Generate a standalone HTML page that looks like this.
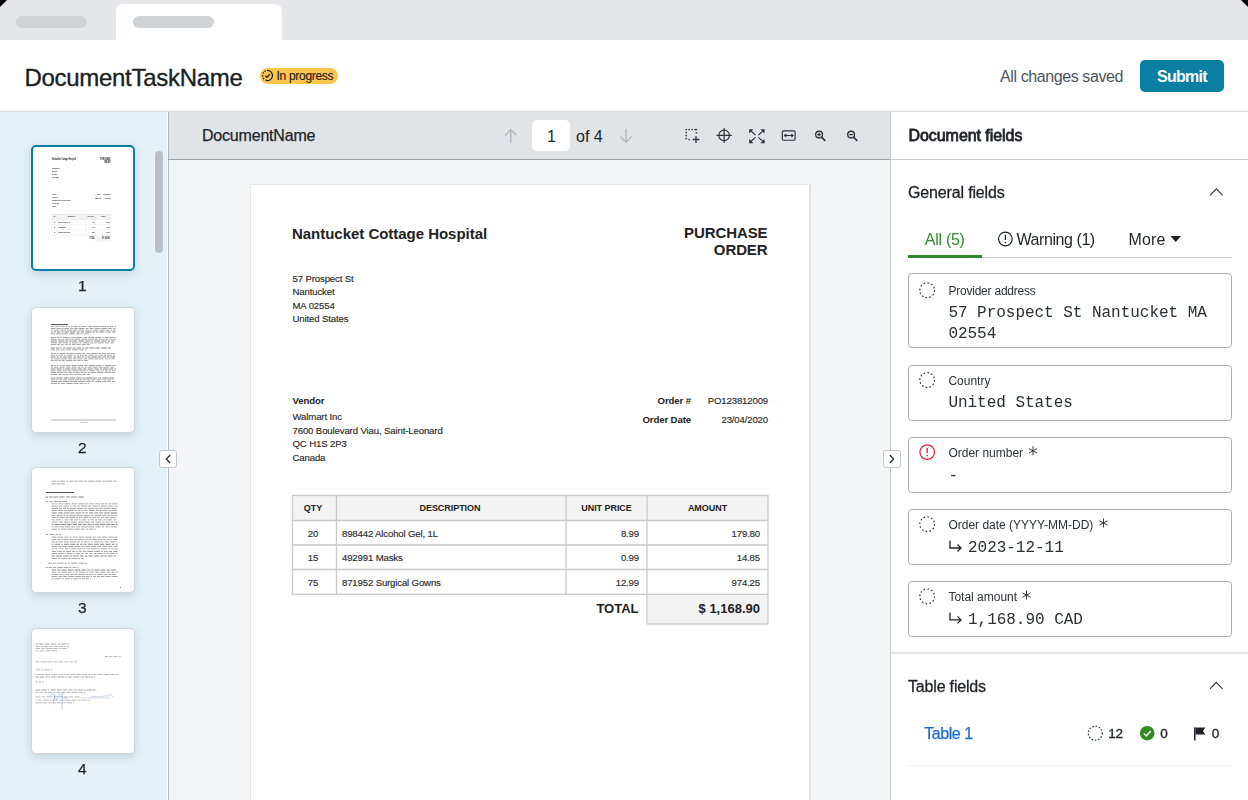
<!DOCTYPE html><html><head><meta charset="utf-8"><style>
html,body{margin:0;padding:0;}
body{width:1248px;height:800px;overflow:hidden;position:relative;background:#fff;font-family:'Liberation Sans',sans-serif;}
.t{position:absolute;line-height:1;white-space:nowrap;}
.r{position:absolute;box-sizing:border-box;}
svg{position:absolute;overflow:visible;}
</style></head><body>

<div class="r" style="left:0px;top:0px;width:1248px;height:40px;background:#e4e6e9"></div>
<div class="r" style="left:116px;top:4px;width:166px;height:36px;background:#fff;border-radius:7px 7px 0 0"></div>
<div class="r" style="left:16px;top:16px;width:71px;height:12px;background:#cfd3d6;border-radius:6px"></div>
<div class="r" style="left:133px;top:16px;width:81px;height:12px;background:#cfd3d6;border-radius:6px"></div>
<svg style="left:0;top:0" width="1248" height="10"><polygon points="0,0 7,0 0,7" fill="#000"/><polygon points="1248,0 1241,0 1248,7" fill="#000"/></svg>
<div class="r" style="left:0px;top:111px;width:1248px;height:1px;background:#d5d9dc"></div>
<div class="t" style="left:24.5px;top:65.60px;font-size:24px;color:#1b1f23;font-weight:normal;letter-spacing:-0.3px;font-family:'Liberation Sans', sans-serif;-webkit-text-stroke:0.35px #1b1f23">DocumentTaskName</div>
<div class="r" style="left:260px;top:68px;width:78px;height:16px;background:#fbc54e;border-radius:8px"></div>
<svg style="left:260px;top:68px" width="78" height="16"><path d="M7.06 2.52 A5 5 0 1 1 5.39 12.03" fill="none" stroke="#1b1f23" stroke-width="1.25"/><path d="M4.03 11.10 A5 5 0 0 1 3.09 9.85" fill="none" stroke="#1b1f23" stroke-width="1.25"/><path d="M2.63 8.62 A5 5 0 0 1 2.52 7.06" fill="none" stroke="#1b1f23" stroke-width="1.25"/><path d="M2.80 5.79 A5 5 0 0 1 3.56 4.42" fill="none" stroke="#1b1f23" stroke-width="1.25"/><path d="M4.49 3.51 A5 5 0 0 1 5.87 2.77" fill="none" stroke="#1b1f23" stroke-width="1.25"/><path d="M5.3 7.7 L7 9.3 L10 6.1" fill="none" stroke="#1b1f23" stroke-width="1.25"/></svg>
<div class="t" style="left:276.5px;top:70.20px;font-size:12px;color:#1b1f23;font-weight:normal;letter-spacing:-0.3px;font-family:'Liberation Sans', sans-serif;-webkit-text-stroke:0.15px #1b1f23">In progress</div>
<div class="t" style="left:1000px;top:69.40px;font-size:16px;color:#4a5560;font-weight:normal;letter-spacing:-0.4px;font-family:'Liberation Sans', sans-serif;">All changes saved</div>
<div class="r" style="left:1140px;top:60px;width:84px;height:32px;background:#0a7fa3;border-radius:5px"></div>
<div class="t" style="left:1157px;top:69.40px;font-size:16px;color:#fff;font-weight:bold;letter-spacing:-0.75px;font-family:'Liberation Sans', sans-serif;">Submit</div>
<div class="r" style="left:0px;top:112px;width:167px;height:688px;background:#e4f1f7"></div>
<div class="r" style="left:167px;top:112px;width:1px;height:688px;background:#fff"></div>
<div class="r" style="left:155px;top:151px;width:8px;height:102px;background:#b9bfc3;border-radius:4px"></div>
<div class="r" style="left:168px;top:112px;width:722px;height:47px;background:#e1e4e7;border-left:1px solid #b5bbc0"></div>
<div class="r" style="left:168px;top:159px;width:722px;height:1px;background:#98a2a8"></div>
<div class="r" style="left:168px;top:160px;width:722px;height:640px;background:#f4f5f7;border-left:1px solid #b5bbc0"></div>
<div class="t" style="left:202px;top:128.40px;font-size:16px;color:#1f2328;font-weight:normal;letter-spacing:-0.2px;font-family:'Liberation Sans', sans-serif;-webkit-text-stroke:0.25px #1f2328">DocumentName</div>
<svg style="left:0;top:0" width="1" height="1"></svg>
<div class="r" style="left:532px;top:120px;width:38px;height:31px;background:#fff;border-radius:5px"></div>
<div class="t" style="left:551.5px;transform:translateX(-50%);top:129.10px;font-size:16px;color:#1f2328;font-weight:normal;letter-spacing:0px;font-family:'Liberation Sans', sans-serif;">1</div>
<div class="t" style="left:576px;top:129.10px;font-size:16px;color:#1f2328;font-weight:normal;letter-spacing:0px;font-family:'Liberation Sans', sans-serif;">of 4</div>
<svg style="left:0;top:0" width="1248" height="800">
<g fill="none" stroke="#b3b9be" stroke-width="1.4" stroke-linecap="round">
<path d="M510.8 142.5 V129.8 M505.6 135 L510.8 129.8 L516 135"/>
<path d="M626 129.5 V142.3 M620.8 137.1 L626 142.3 L631.2 137.1"/>
</g>
<g fill="none" stroke="#2d3439" stroke-width="1.1">
<rect x="685.4" y="128.9" width="1.6" height="1.3" fill="#2d3439" stroke="none"/><rect x="688.4" y="128.9" width="1.6" height="1.3" fill="#2d3439" stroke="none"/><rect x="691.4" y="128.9" width="1.6" height="1.3" fill="#2d3439" stroke="none"/><rect x="694.4" y="128.9" width="1.6" height="1.3" fill="#2d3439" stroke="none"/><rect x="685.4" y="131.9" width="1.6" height="1.3" fill="#2d3439" stroke="none"/><rect x="685.4" y="134.9" width="1.6" height="1.3" fill="#2d3439" stroke="none"/><rect x="685.4" y="137.9" width="1.6" height="1.3" fill="#2d3439" stroke="none"/><rect x="688.4" y="138.9" width="1.6" height="1.3" fill="#2d3439" stroke="none"/><rect x="695.6" y="128.9" width="1.6" height="1.3" fill="#2d3439" stroke="none"/><rect x="695.6" y="132.2" width="1.6" height="1.3" fill="#2d3439" stroke="none"/>
<path d="M696 136.3 V143 M692.7 139.5 H699.4" stroke-width="1.35"/>
<circle cx="724.1" cy="135.4" r="5.3" stroke-width="1.2"/>
<path d="M724.1 128 V143 M716.5 135.4 H731.8" stroke-width="1.2"/>
<path d="M750 130 L755.4 135.1 M764 130 L758.4 135.1 M750 142.3 L755.4 137.4 M764 142.3 L758.4 137.4" stroke-width="1.2"/>
<path d="M749.2 129.2 h4.2 l-4.2 4.2 z M764.6 129.2 h-4.2 l4.2 4.2 z M749.2 143.2 h4.2 l-4.2 -4.2 z M764.6 143.2 h-4.2 l4.2 -4.2 z" fill="#2d3439" stroke="none"/>
<rect x="782.3" y="130.8" width="12.8" height="9.4" rx="1.3" stroke-width="1.15"/>
<path d="M784.3 135.5 H793.3" stroke-width="1.1"/>
<path d="M784 135.5 L786 134 V137 Z M793.6 135.5 L791.6 134 V137 Z" fill="#2d3439" stroke-width="0.6"/>
<circle cx="819.1" cy="134.6" r="3.4" stroke-width="1.35"/>
<path d="M821.6 137.1 L825.3 140.9" stroke-width="1.6"/>
<path d="M817.4 134.6 H820.8 M819.1 132.9 V136.3" stroke-width="1.3"/>
<circle cx="851.1" cy="134.6" r="3.4" stroke-width="1.35"/>
<path d="M853.6 137.1 L857.3 140.9" stroke-width="1.6"/>
<path d="M849.3 134.6 H852.9" stroke-width="1.4"/>
</g></svg>
<div class="r" style="left:250px;top:184px;width:561px;height:640px;background:#fff;border:1px solid #e6e7e8;border-right:2px solid #e2e3e4;border-bottom:none"></div>
<div class="t" style="left:292px;top:226.05px;font-size:15px;color:#222;font-weight:bold;letter-spacing:-0.03px;font-family:'Liberation Sans', sans-serif;">Nantucket Cottage Hospital</div>
<div class="t" style="right:480.5px;top:225.45px;font-size:15px;color:#222;font-weight:bold;letter-spacing:-0.1px;font-family:'Liberation Sans', sans-serif;">PURCHASE</div>
<div class="t" style="right:480.5px;top:241.65px;font-size:15px;color:#222;font-weight:bold;letter-spacing:-0.1px;font-family:'Liberation Sans', sans-serif;">ORDER</div>
<div class="t" style="left:292.5px;top:273.84px;font-size:9.6px;color:#2b2b2b;font-weight:normal;letter-spacing:-0.13px;font-family:'Liberation Sans', sans-serif;-webkit-text-stroke:0.15px #2b2b2b">57 Prospect St</div>
<div class="t" style="left:292.5px;top:287.34px;font-size:9.6px;color:#2b2b2b;font-weight:normal;letter-spacing:-0.13px;font-family:'Liberation Sans', sans-serif;-webkit-text-stroke:0.15px #2b2b2b">Nantucket</div>
<div class="t" style="left:292.5px;top:300.84px;font-size:9.6px;color:#2b2b2b;font-weight:normal;letter-spacing:-0.13px;font-family:'Liberation Sans', sans-serif;-webkit-text-stroke:0.15px #2b2b2b">MA 02554</div>
<div class="t" style="left:292.5px;top:314.34px;font-size:9.6px;color:#2b2b2b;font-weight:normal;letter-spacing:-0.13px;font-family:'Liberation Sans', sans-serif;-webkit-text-stroke:0.15px #2b2b2b">United States</div>
<div class="t" style="left:292.5px;top:396.04px;font-size:9.6px;color:#222;font-weight:bold;letter-spacing:-0.1px;font-family:'Liberation Sans', sans-serif;">Vendor</div>
<div class="t" style="left:292.5px;top:412.24px;font-size:9.6px;color:#2b2b2b;font-weight:normal;letter-spacing:-0.13px;font-family:'Liberation Sans', sans-serif;-webkit-text-stroke:0.15px #2b2b2b">Walmart Inc</div>
<div class="t" style="left:292.5px;top:425.69px;font-size:9.6px;color:#2b2b2b;font-weight:normal;letter-spacing:-0.13px;font-family:'Liberation Sans', sans-serif;-webkit-text-stroke:0.15px #2b2b2b">7600 Boulevard Viau, Saint-Leonard</div>
<div class="t" style="left:292.5px;top:439.14px;font-size:9.6px;color:#2b2b2b;font-weight:normal;letter-spacing:-0.13px;font-family:'Liberation Sans', sans-serif;-webkit-text-stroke:0.15px #2b2b2b">QC H1S 2P3</div>
<div class="t" style="left:292.5px;top:452.59px;font-size:9.6px;color:#2b2b2b;font-weight:normal;letter-spacing:-0.13px;font-family:'Liberation Sans', sans-serif;-webkit-text-stroke:0.15px #2b2b2b">Canada</div>
<div class="t" style="right:557px;top:396.24px;font-size:9.6px;color:#222;font-weight:bold;letter-spacing:-0.1px;font-family:'Liberation Sans', sans-serif;">Order #</div>
<div class="t" style="right:557px;top:414.84px;font-size:9.6px;color:#222;font-weight:bold;letter-spacing:-0.1px;font-family:'Liberation Sans', sans-serif;">Order Date</div>
<div class="t" style="right:480px;top:396.24px;font-size:9.6px;color:#2b2b2b;font-weight:normal;letter-spacing:-0.15px;font-family:'Liberation Sans', sans-serif;-webkit-text-stroke:0.15px #2b2b2b">PO123812009</div>
<div class="t" style="right:480px;top:414.84px;font-size:9.6px;color:#2b2b2b;font-weight:normal;letter-spacing:-0.15px;font-family:'Liberation Sans', sans-serif;-webkit-text-stroke:0.15px #2b2b2b">23/04/2020</div>
<div class="r" style="left:292.5px;top:495.5px;width:476px;height:25px;background:#f3f3f3"></div>
<svg style="left:0;top:0" width="1248" height="800"><g stroke="#c9c9c9" stroke-width="1.3" fill="none">
<rect x="292.5" y="495.5" width="475.5" height="98.8"/>
<path d="M292.5 520.5 H768 M292.5 545 H768 M292.5 569.5 H768 M336.5 495.5 V594.3 M566 495.5 V594.3 M647 495.5 V624 M768 594.3 V624 M647 624 H768"/>
</g></svg>
<div class="r" style="left:647.6px;top:595px;width:119.8px;height:28.4px;background:#f3f3f3"></div>
<div class="t" style="left:313px;transform:translateX(-50%);top:503.75px;font-size:9px;color:#222;font-weight:bold;letter-spacing:-0.05px;font-family:'Liberation Sans', sans-serif;">QTY</div>
<div class="t" style="left:450px;transform:translateX(-50%);top:503.75px;font-size:9px;color:#222;font-weight:bold;letter-spacing:-0.05px;font-family:'Liberation Sans', sans-serif;">DESCRIPTION</div>
<div class="t" style="left:606.5px;transform:translateX(-50%);top:503.75px;font-size:9px;color:#222;font-weight:bold;letter-spacing:-0.05px;font-family:'Liberation Sans', sans-serif;">UNIT PRICE</div>
<div class="t" style="left:707.5px;transform:translateX(-50%);top:503.75px;font-size:9px;color:#222;font-weight:bold;letter-spacing:-0.05px;font-family:'Liberation Sans', sans-serif;">AMOUNT</div>
<div class="t" style="left:313px;transform:translateX(-50%);top:528.54px;font-size:9.6px;color:#2b2b2b;font-weight:normal;letter-spacing:-0.15px;font-family:'Liberation Sans', sans-serif;-webkit-text-stroke:0.15px #2b2b2b">20</div>
<div class="t" style="left:342px;top:528.54px;font-size:9.6px;color:#2b2b2b;font-weight:normal;letter-spacing:-0.15px;font-family:'Liberation Sans', sans-serif;-webkit-text-stroke:0.15px #2b2b2b">898442 Alcohol Gel, 1L</div>
<div class="t" style="right:609px;top:528.54px;font-size:9.6px;color:#2b2b2b;font-weight:normal;letter-spacing:-0.15px;font-family:'Liberation Sans', sans-serif;-webkit-text-stroke:0.15px #2b2b2b">8.99</div>
<div class="t" style="right:488px;top:528.54px;font-size:9.6px;color:#2b2b2b;font-weight:normal;letter-spacing:-0.15px;font-family:'Liberation Sans', sans-serif;-webkit-text-stroke:0.15px #2b2b2b">179.80</div>
<div class="t" style="left:313px;transform:translateX(-50%);top:553.19px;font-size:9.6px;color:#2b2b2b;font-weight:normal;letter-spacing:-0.15px;font-family:'Liberation Sans', sans-serif;-webkit-text-stroke:0.15px #2b2b2b">15</div>
<div class="t" style="left:342px;top:553.19px;font-size:9.6px;color:#2b2b2b;font-weight:normal;letter-spacing:-0.15px;font-family:'Liberation Sans', sans-serif;-webkit-text-stroke:0.15px #2b2b2b">492991 Masks</div>
<div class="t" style="right:609px;top:553.19px;font-size:9.6px;color:#2b2b2b;font-weight:normal;letter-spacing:-0.15px;font-family:'Liberation Sans', sans-serif;-webkit-text-stroke:0.15px #2b2b2b">0.99</div>
<div class="t" style="right:488px;top:553.19px;font-size:9.6px;color:#2b2b2b;font-weight:normal;letter-spacing:-0.15px;font-family:'Liberation Sans', sans-serif;-webkit-text-stroke:0.15px #2b2b2b">14.85</div>
<div class="t" style="left:313px;transform:translateX(-50%);top:577.84px;font-size:9.6px;color:#2b2b2b;font-weight:normal;letter-spacing:-0.15px;font-family:'Liberation Sans', sans-serif;-webkit-text-stroke:0.15px #2b2b2b">75</div>
<div class="t" style="left:342px;top:577.84px;font-size:9.6px;color:#2b2b2b;font-weight:normal;letter-spacing:-0.15px;font-family:'Liberation Sans', sans-serif;-webkit-text-stroke:0.15px #2b2b2b">871952 Surgical Gowns</div>
<div class="t" style="right:609px;top:577.84px;font-size:9.6px;color:#2b2b2b;font-weight:normal;letter-spacing:-0.15px;font-family:'Liberation Sans', sans-serif;-webkit-text-stroke:0.15px #2b2b2b">12.99</div>
<div class="t" style="right:488px;top:577.84px;font-size:9.6px;color:#2b2b2b;font-weight:normal;letter-spacing:-0.15px;font-family:'Liberation Sans', sans-serif;-webkit-text-stroke:0.15px #2b2b2b">974.25</div>
<div class="t" style="right:609.5px;top:602.25px;font-size:13px;color:#222;font-weight:bold;letter-spacing:0px;font-family:'Liberation Sans', sans-serif;">TOTAL</div>
<div class="t" style="right:488px;top:602.25px;font-size:13px;color:#222;font-weight:bold;letter-spacing:0px;font-family:'Liberation Sans', sans-serif;">$ 1,168.90</div>
<div class="r" style="left:31px;top:145px;width:104px;height:126px;background:#fff;border:2.5px solid #0a7ea2;border-radius:5px;box-shadow:0 3px 10px rgba(30,60,80,0.16);"></div>
<div style="position:absolute;left:0;top:0;width:1248px;height:800px;transform-origin:0 0;transform:matrix(0.1229,0,0,0.211,16.15,109.6);will-change:transform;"><div class="t" style="left:292px;top:226.05px;font-size:15px;color:#222;font-weight:bold;letter-spacing:-0.03px;font-family:'Liberation Sans', sans-serif;">Nantucket Cottage Hospital</div>
<div class="t" style="right:480.5px;top:225.45px;font-size:15px;color:#222;font-weight:bold;letter-spacing:-0.1px;font-family:'Liberation Sans', sans-serif;">PURCHASE</div>
<div class="t" style="right:480.5px;top:241.65px;font-size:15px;color:#222;font-weight:bold;letter-spacing:-0.1px;font-family:'Liberation Sans', sans-serif;">ORDER</div>
<div class="t" style="left:292.5px;top:273.84px;font-size:9.6px;color:#2b2b2b;font-weight:normal;letter-spacing:-0.13px;font-family:'Liberation Sans', sans-serif;-webkit-text-stroke:0.15px #2b2b2b">57 Prospect St</div>
<div class="t" style="left:292.5px;top:287.34px;font-size:9.6px;color:#2b2b2b;font-weight:normal;letter-spacing:-0.13px;font-family:'Liberation Sans', sans-serif;-webkit-text-stroke:0.15px #2b2b2b">Nantucket</div>
<div class="t" style="left:292.5px;top:300.84px;font-size:9.6px;color:#2b2b2b;font-weight:normal;letter-spacing:-0.13px;font-family:'Liberation Sans', sans-serif;-webkit-text-stroke:0.15px #2b2b2b">MA 02554</div>
<div class="t" style="left:292.5px;top:314.34px;font-size:9.6px;color:#2b2b2b;font-weight:normal;letter-spacing:-0.13px;font-family:'Liberation Sans', sans-serif;-webkit-text-stroke:0.15px #2b2b2b">United States</div>
<div class="t" style="left:292.5px;top:396.04px;font-size:9.6px;color:#222;font-weight:bold;letter-spacing:-0.1px;font-family:'Liberation Sans', sans-serif;">Vendor</div>
<div class="t" style="left:292.5px;top:412.24px;font-size:9.6px;color:#2b2b2b;font-weight:normal;letter-spacing:-0.13px;font-family:'Liberation Sans', sans-serif;-webkit-text-stroke:0.15px #2b2b2b">Walmart Inc</div>
<div class="t" style="left:292.5px;top:425.69px;font-size:9.6px;color:#2b2b2b;font-weight:normal;letter-spacing:-0.13px;font-family:'Liberation Sans', sans-serif;-webkit-text-stroke:0.15px #2b2b2b">7600 Boulevard Viau, Saint-Leonard</div>
<div class="t" style="left:292.5px;top:439.14px;font-size:9.6px;color:#2b2b2b;font-weight:normal;letter-spacing:-0.13px;font-family:'Liberation Sans', sans-serif;-webkit-text-stroke:0.15px #2b2b2b">QC H1S 2P3</div>
<div class="t" style="left:292.5px;top:452.59px;font-size:9.6px;color:#2b2b2b;font-weight:normal;letter-spacing:-0.13px;font-family:'Liberation Sans', sans-serif;-webkit-text-stroke:0.15px #2b2b2b">Canada</div>
<div class="t" style="right:557px;top:396.24px;font-size:9.6px;color:#222;font-weight:bold;letter-spacing:-0.1px;font-family:'Liberation Sans', sans-serif;">Order #</div>
<div class="t" style="right:557px;top:414.84px;font-size:9.6px;color:#222;font-weight:bold;letter-spacing:-0.1px;font-family:'Liberation Sans', sans-serif;">Order Date</div>
<div class="t" style="right:480px;top:396.24px;font-size:9.6px;color:#2b2b2b;font-weight:normal;letter-spacing:-0.15px;font-family:'Liberation Sans', sans-serif;-webkit-text-stroke:0.15px #2b2b2b">PO123812009</div>
<div class="t" style="right:480px;top:414.84px;font-size:9.6px;color:#2b2b2b;font-weight:normal;letter-spacing:-0.15px;font-family:'Liberation Sans', sans-serif;-webkit-text-stroke:0.15px #2b2b2b">23/04/2020</div>
<div class="r" style="left:292.5px;top:495.5px;width:476px;height:25px;background:#f3f3f3"></div>
<svg style="left:0;top:0" width="1248" height="800"><g stroke="#c9c9c9" stroke-width="1.3" fill="none">
<rect x="292.5" y="495.5" width="475.5" height="98.8"/>
<path d="M292.5 520.5 H768 M292.5 545 H768 M292.5 569.5 H768 M336.5 495.5 V594.3 M566 495.5 V594.3 M647 495.5 V624 M768 594.3 V624 M647 624 H768"/>
</g></svg>
<div class="r" style="left:647.6px;top:595px;width:119.8px;height:28.4px;background:#f3f3f3"></div>
<div class="t" style="left:313px;transform:translateX(-50%);top:503.75px;font-size:9px;color:#222;font-weight:bold;letter-spacing:-0.05px;font-family:'Liberation Sans', sans-serif;">QTY</div>
<div class="t" style="left:450px;transform:translateX(-50%);top:503.75px;font-size:9px;color:#222;font-weight:bold;letter-spacing:-0.05px;font-family:'Liberation Sans', sans-serif;">DESCRIPTION</div>
<div class="t" style="left:606.5px;transform:translateX(-50%);top:503.75px;font-size:9px;color:#222;font-weight:bold;letter-spacing:-0.05px;font-family:'Liberation Sans', sans-serif;">UNIT PRICE</div>
<div class="t" style="left:707.5px;transform:translateX(-50%);top:503.75px;font-size:9px;color:#222;font-weight:bold;letter-spacing:-0.05px;font-family:'Liberation Sans', sans-serif;">AMOUNT</div>
<div class="t" style="left:313px;transform:translateX(-50%);top:528.54px;font-size:9.6px;color:#2b2b2b;font-weight:normal;letter-spacing:-0.15px;font-family:'Liberation Sans', sans-serif;-webkit-text-stroke:0.15px #2b2b2b">20</div>
<div class="t" style="left:342px;top:528.54px;font-size:9.6px;color:#2b2b2b;font-weight:normal;letter-spacing:-0.15px;font-family:'Liberation Sans', sans-serif;-webkit-text-stroke:0.15px #2b2b2b">898442 Alcohol Gel, 1L</div>
<div class="t" style="right:609px;top:528.54px;font-size:9.6px;color:#2b2b2b;font-weight:normal;letter-spacing:-0.15px;font-family:'Liberation Sans', sans-serif;-webkit-text-stroke:0.15px #2b2b2b">8.99</div>
<div class="t" style="right:488px;top:528.54px;font-size:9.6px;color:#2b2b2b;font-weight:normal;letter-spacing:-0.15px;font-family:'Liberation Sans', sans-serif;-webkit-text-stroke:0.15px #2b2b2b">179.80</div>
<div class="t" style="left:313px;transform:translateX(-50%);top:553.19px;font-size:9.6px;color:#2b2b2b;font-weight:normal;letter-spacing:-0.15px;font-family:'Liberation Sans', sans-serif;-webkit-text-stroke:0.15px #2b2b2b">15</div>
<div class="t" style="left:342px;top:553.19px;font-size:9.6px;color:#2b2b2b;font-weight:normal;letter-spacing:-0.15px;font-family:'Liberation Sans', sans-serif;-webkit-text-stroke:0.15px #2b2b2b">492991 Masks</div>
<div class="t" style="right:609px;top:553.19px;font-size:9.6px;color:#2b2b2b;font-weight:normal;letter-spacing:-0.15px;font-family:'Liberation Sans', sans-serif;-webkit-text-stroke:0.15px #2b2b2b">0.99</div>
<div class="t" style="right:488px;top:553.19px;font-size:9.6px;color:#2b2b2b;font-weight:normal;letter-spacing:-0.15px;font-family:'Liberation Sans', sans-serif;-webkit-text-stroke:0.15px #2b2b2b">14.85</div>
<div class="t" style="left:313px;transform:translateX(-50%);top:577.84px;font-size:9.6px;color:#2b2b2b;font-weight:normal;letter-spacing:-0.15px;font-family:'Liberation Sans', sans-serif;-webkit-text-stroke:0.15px #2b2b2b">75</div>
<div class="t" style="left:342px;top:577.84px;font-size:9.6px;color:#2b2b2b;font-weight:normal;letter-spacing:-0.15px;font-family:'Liberation Sans', sans-serif;-webkit-text-stroke:0.15px #2b2b2b">871952 Surgical Gowns</div>
<div class="t" style="right:609px;top:577.84px;font-size:9.6px;color:#2b2b2b;font-weight:normal;letter-spacing:-0.15px;font-family:'Liberation Sans', sans-serif;-webkit-text-stroke:0.15px #2b2b2b">12.99</div>
<div class="t" style="right:488px;top:577.84px;font-size:9.6px;color:#2b2b2b;font-weight:normal;letter-spacing:-0.15px;font-family:'Liberation Sans', sans-serif;-webkit-text-stroke:0.15px #2b2b2b">974.25</div>
<div class="t" style="right:609.5px;top:602.25px;font-size:13px;color:#222;font-weight:bold;letter-spacing:0px;font-family:'Liberation Sans', sans-serif;">TOTAL</div>
<div class="t" style="right:488px;top:602.25px;font-size:13px;color:#222;font-weight:bold;letter-spacing:0px;font-family:'Liberation Sans', sans-serif;">$ 1,168.90</div></div>
<div class="r" style="left:31px;top:307px;width:104px;height:126px;background:#fff;border:1px solid #d2d6d9;border-radius:5px;box-shadow:0 3px 10px rgba(30,60,80,0.16);"></div>
<div class="r" style="left:31px;top:467px;width:104px;height:126px;background:#fff;border:1px solid #d2d6d9;border-radius:5px;box-shadow:0 3px 10px rgba(30,60,80,0.16);"></div>
<div class="r" style="left:31px;top:628px;width:104px;height:126px;background:#fff;border:1px solid #d2d6d9;border-radius:5px;box-shadow:0 3px 10px rgba(30,60,80,0.16);"></div>
<div class="t" style="left:82.4px;transform:translateX(-50%);top:277.82px;font-size:15.5px;color:#1f2328;font-weight:normal;letter-spacing:0px;font-family:'Liberation Sans', sans-serif;-webkit-text-stroke:0.25px #1f2328">1</div>
<div class="t" style="left:82.4px;transform:translateX(-50%);top:440.12px;font-size:15.5px;color:#1f2328;font-weight:normal;letter-spacing:0px;font-family:'Liberation Sans', sans-serif;-webkit-text-stroke:0.25px #1f2328">2</div>
<div class="t" style="left:82.4px;transform:translateX(-50%);top:600.33px;font-size:15.5px;color:#1f2328;font-weight:normal;letter-spacing:0px;font-family:'Liberation Sans', sans-serif;-webkit-text-stroke:0.25px #1f2328">3</div>
<div class="t" style="left:82.4px;transform:translateX(-50%);top:760.53px;font-size:15.5px;color:#1f2328;font-weight:normal;letter-spacing:0px;font-family:'Liberation Sans', sans-serif;-webkit-text-stroke:0.25px #1f2328">4</div>
<div class="r" style="left:50.8px;top:324.3px;width:17px;height:1.1px;background:rgba(40,40,40,0.8)"></div>
<div class="r" style="left:50.8px;top:419.4px;width:65px;height:1.5px;background:#d9d9d9"></div>
<div class="r" style="left:80px;top:422px;width:8px;height:0.8px;background:rgba(120,120,120,0.4)"></div>
<svg style="left:0;top:0" width="1248" height="800"><path d="M50.8 326.20h3.1v0.8h-3.1zM54.8 326.20h4.8v0.8h-4.8zM60.4 326.20h4.2v0.8h-4.2zM65.5 326.20h1.8v0.8h-1.8zM68.4 326.20h1.7v0.8h-1.7zM71.1 326.20h1.8v0.8h-1.8zM73.8 326.20h3.6v0.8h-3.6zM78.6 326.20h2.1v0.8h-2.1zM81.7 326.20h4.6v0.8h-4.6zM87.6 326.20h4.4v0.8h-4.4zM93.0 326.20h6.4v0.8h-6.4zM100.2 326.20h5.8v0.8h-5.8zM106.9 326.20h2.2v0.8h-2.2zM110.0 326.20h3.0v0.8h-3.0zM114.2 326.20h1.6v0.8h-1.6zM50.8 328.00h4.7v0.8h-4.7zM56.5 328.00h4.2v0.8h-4.2zM61.6 328.00h1.8v0.8h-1.8zM64.3 328.00h4.9v0.8h-4.9zM70.2 328.00h3.1v0.8h-3.1zM74.3 328.00h3.8v0.8h-3.8zM79.0 328.00h5.5v0.8h-5.5zM85.7 328.00h2.7v0.8h-2.7zM89.5 328.00h4.1v0.8h-4.1zM94.8 328.00h5.1v0.8h-5.1zM100.9 328.00h6.4v0.8h-6.4zM108.2 328.00h3.6v0.8h-3.6zM113.0 328.00h2.3v0.8h-2.3zM50.8 329.80h1.7v0.8h-1.7zM53.6 329.80h5.3v0.8h-5.3zM60.0 329.80h5.9v0.8h-5.9zM66.9 329.80h5.0v0.8h-5.0zM72.9 329.80h4.4v0.8h-4.4zM78.4 329.80h5.7v0.8h-5.7zM85.3 329.80h3.9v0.8h-3.9zM90.3 329.80h1.8v0.8h-1.8zM93.3 329.80h4.7v0.8h-4.7zM99.3 329.80h5.6v0.8h-5.6zM105.9 329.80h3.4v0.8h-3.4zM110.5 329.80h1.6v0.8h-1.6zM113.1 329.80h2.3v0.8h-2.3zM50.8 331.60h1.8v0.8h-1.8zM53.8 331.60h2.1v0.8h-2.1zM56.8 331.60h3.5v0.8h-3.5zM61.5 331.60h1.9v0.8h-1.9zM64.5 331.60h4.2v0.8h-4.2zM70.0 331.60h5.6v0.8h-5.6zM76.8 331.60h2.9v0.8h-2.9zM80.7 331.60h3.3v0.8h-3.3zM85.2 331.60h6.3v0.8h-6.3zM92.4 331.60h2.4v0.8h-2.4zM95.7 331.60h2.7v0.8h-2.7zM99.4 331.60h4.4v0.8h-4.4zM104.8 331.60h1.5v0.8h-1.5zM107.3 331.60h3.3v0.8h-3.3zM111.7 331.60h4.1v0.8h-4.1zM50.8 333.40h4.1v0.8h-4.1zM56.0 333.40h4.9v0.8h-4.9zM61.7 333.40h6.0v0.8h-6.0zM68.9 333.40h5.9v0.8h-5.9zM76.0 333.40h3.5v0.8h-3.5zM80.4 333.40h2.0v0.8h-2.0zM83.5 333.40h1.8v0.8h-1.8zM86.2 333.40h2.5v0.8h-2.5zM50.8 337.00h3.2v0.8h-3.2zM54.8 337.00h1.5v0.8h-1.5zM57.2 337.00h2.0v0.8h-2.0zM60.2 337.00h1.6v0.8h-1.6zM63.1 337.00h4.6v0.8h-4.6zM68.5 337.00h2.8v0.8h-2.8zM72.2 337.00h3.3v0.8h-3.3zM76.4 337.00h5.7v0.8h-5.7zM83.5 337.00h3.8v0.8h-3.8zM88.3 337.00h1.9v0.8h-1.9zM91.1 337.00h3.2v0.8h-3.2zM95.3 337.00h5.6v0.8h-5.6zM101.8 337.00h1.6v0.8h-1.6zM104.7 337.00h4.1v0.8h-4.1zM109.7 337.00h4.2v0.8h-4.2zM114.7 337.00h1.1v0.8h-1.1zM50.8 338.80h5.8v0.8h-5.8zM57.8 338.80h2.8v0.8h-2.8zM61.6 338.80h2.3v0.8h-2.3zM65.1 338.80h4.2v0.8h-4.2zM70.4 338.80h3.1v0.8h-3.1zM74.5 338.80h5.6v0.8h-5.6zM81.3 338.80h5.8v0.8h-5.8zM88.3 338.80h5.6v0.8h-5.6zM95.1 338.80h2.6v0.8h-2.6zM98.8 338.80h3.3v0.8h-3.3zM102.8 338.80h1.6v0.8h-1.6zM105.4 338.80h2.8v0.8h-2.8zM109.4 338.80h6.3v0.8h-6.3zM50.8 340.60h6.2v0.8h-6.2zM58.3 340.60h6.3v0.8h-6.3zM65.5 340.60h2.6v0.8h-2.6zM69.1 340.60h2.5v0.8h-2.5zM72.4 340.60h4.6v0.8h-4.6zM78.3 340.60h5.7v0.8h-5.7zM85.1 340.60h4.8v0.8h-4.8zM91.0 340.60h1.9v0.8h-1.9zM94.1 340.60h6.0v0.8h-6.0zM101.3 340.60h5.3v0.8h-5.3zM107.6 340.60h2.4v0.8h-2.4zM111.2 340.60h3.2v0.8h-3.2zM50.8 342.40h6.4v0.8h-6.4zM58.2 342.40h3.5v0.8h-3.5zM62.9 342.40h5.1v0.8h-5.1zM68.9 342.40h2.1v0.8h-2.1zM72.0 342.40h6.0v0.8h-6.0zM79.2 342.40h2.2v0.8h-2.2zM82.6 342.40h6.4v0.8h-6.4zM90.2 342.40h3.3v0.8h-3.3zM94.5 342.40h2.2v0.8h-2.2zM97.4 342.40h6.4v0.8h-6.4zM104.9 342.40h4.1v0.8h-4.1zM110.3 342.40h3.7v0.8h-3.7zM50.8 344.20h5.6v0.8h-5.6zM57.3 344.20h2.8v0.8h-2.8zM61.0 344.20h2.7v0.8h-2.7zM64.8 344.20h2.8v0.8h-2.8zM68.6 344.20h2.2v0.8h-2.2zM72.1 344.20h3.3v0.8h-3.3zM76.4 344.20h4.4v0.8h-4.4zM82.0 344.20h3.6v0.8h-3.6zM86.9 344.20h2.9v0.8h-2.9zM50.8 347.60h4.1v0.8h-4.1zM55.7 347.60h3.7v0.8h-3.7zM60.3 347.60h1.5v0.8h-1.5zM63.0 347.60h2.4v0.8h-2.4zM66.4 347.60h5.1v0.8h-5.1zM72.6 347.60h3.1v0.8h-3.1zM76.8 347.60h4.3v0.8h-4.3zM82.3 347.60h2.0v0.8h-2.0zM85.4 347.60h2.7v0.8h-2.7zM89.1 347.60h5.4v0.8h-5.4zM95.5 347.60h4.3v0.8h-4.3zM101.0 347.60h6.1v0.8h-6.1zM108.1 347.60h2.7v0.8h-2.7zM50.8 349.40h4.1v0.8h-4.1zM56.0 349.40h3.8v0.8h-3.8zM60.8 349.40h3.9v0.8h-3.9zM66.0 349.40h5.0v0.8h-5.0zM72.2 349.40h6.2v0.8h-6.2zM79.4 349.40h4.3v0.8h-4.3zM84.9 349.40h1.9v0.8h-1.9zM50.8 353.00h2.1v0.8h-2.1zM53.9 353.00h1.9v0.8h-1.9zM56.7 353.00h1.9v0.8h-1.9zM59.7 353.00h5.4v0.8h-5.4zM66.4 353.00h2.3v0.8h-2.3zM69.8 353.00h4.8v0.8h-4.8zM75.5 353.00h5.9v0.8h-5.9zM82.7 353.00h2.6v0.8h-2.6zM86.6 353.00h3.5v0.8h-3.5zM91.1 353.00h6.4v0.8h-6.4zM98.8 353.00h2.3v0.8h-2.3zM102.1 353.00h4.1v0.8h-4.1zM107.1 353.00h2.5v0.8h-2.5zM110.6 353.00h4.2v0.8h-4.2zM50.8 354.80h4.3v0.8h-4.3zM56.1 354.80h1.6v0.8h-1.6zM58.6 354.80h4.6v0.8h-4.6zM64.3 354.80h1.8v0.8h-1.8zM67.4 354.80h5.4v0.8h-5.4zM74.2 354.80h2.0v0.8h-2.0zM77.1 354.80h1.7v0.8h-1.7zM80.0 354.80h2.9v0.8h-2.9zM83.7 354.80h3.6v0.8h-3.6zM88.6 354.80h5.6v0.8h-5.6zM95.1 354.80h2.2v0.8h-2.2zM98.6 354.80h4.4v0.8h-4.4zM104.1 354.80h1.9v0.8h-1.9zM106.9 354.80h4.9v0.8h-4.9zM112.9 354.80h1.9v0.8h-1.9zM50.8 356.60h4.7v0.8h-4.7zM56.7 356.60h1.9v0.8h-1.9zM59.8 356.60h1.8v0.8h-1.8zM62.9 356.60h3.8v0.8h-3.8zM67.6 356.60h4.3v0.8h-4.3zM73.2 356.60h2.8v0.8h-2.8zM76.9 356.60h4.1v0.8h-4.1zM81.9 356.60h2.0v0.8h-2.0zM84.8 356.60h1.8v0.8h-1.8zM87.5 356.60h3.1v0.8h-3.1zM91.5 356.60h5.3v0.8h-5.3zM97.7 356.60h4.0v0.8h-4.0zM102.6 356.60h3.2v0.8h-3.2zM106.7 356.60h2.8v0.8h-2.8zM110.2 356.60h4.6v0.8h-4.6zM50.8 358.40h2.4v0.8h-2.4zM54.3 358.40h6.2v0.8h-6.2zM61.3 358.40h5.6v0.8h-5.6zM67.9 358.40h4.0v0.8h-4.0zM73.1 358.40h3.5v0.8h-3.5zM77.6 358.40h4.9v0.8h-4.9zM83.9 358.40h3.2v0.8h-3.2zM88.3 358.40h5.0v0.8h-5.0zM94.4 358.40h3.5v0.8h-3.5zM98.9 358.40h1.8v0.8h-1.8zM101.6 358.40h1.9v0.8h-1.9zM104.6 358.40h2.8v0.8h-2.8zM108.3 358.40h1.9v0.8h-1.9zM111.4 358.40h3.4v0.8h-3.4zM50.8 360.20h2.9v0.8h-2.9zM54.6 360.20h3.0v0.8h-3.0zM58.6 360.20h2.3v0.8h-2.3zM61.9 360.20h2.8v0.8h-2.8zM66.0 360.20h6.4v0.8h-6.4zM73.5 360.20h2.7v0.8h-2.7zM77.5 360.20h3.0v0.8h-3.0zM81.5 360.20h1.5v0.8h-1.5zM84.0 360.20h3.9v0.8h-3.9zM50.8 365.00h2.5v0.8h-2.5zM54.4 365.00h1.5v0.8h-1.5zM56.8 365.00h1.9v0.8h-1.9zM59.8 365.00h1.7v0.8h-1.7zM62.3 365.00h3.0v0.8h-3.0zM66.2 365.00h4.4v0.8h-4.4zM71.7 365.00h5.3v0.8h-5.3zM78.1 365.00h5.1v0.8h-5.1zM84.4 365.00h3.4v0.8h-3.4zM88.8 365.00h6.4v0.8h-6.4zM96.1 365.00h5.1v0.8h-5.1zM102.4 365.00h1.7v0.8h-1.7zM105.3 365.00h6.0v0.8h-6.0zM112.4 365.00h3.4v0.8h-3.4zM50.8 366.80h2.2v0.8h-2.2zM54.1 366.80h4.0v0.8h-4.0zM59.3 366.80h5.5v0.8h-5.5zM66.0 366.80h4.4v0.8h-4.4zM71.7 366.80h4.9v0.8h-4.9zM77.8 366.80h2.6v0.8h-2.6zM81.2 366.80h2.2v0.8h-2.2zM84.4 366.80h2.0v0.8h-2.0zM87.6 366.80h4.3v0.8h-4.3zM93.0 366.80h4.6v0.8h-4.6zM98.8 366.80h3.9v0.8h-3.9zM103.5 366.80h5.5v0.8h-5.5zM110.2 366.80h4.0v0.8h-4.0zM50.8 368.60h4.8v0.8h-4.8zM56.4 368.60h5.2v0.8h-5.2zM62.5 368.60h1.9v0.8h-1.9zM65.3 368.60h5.1v0.8h-5.1zM71.4 368.60h5.2v0.8h-5.2zM77.9 368.60h4.0v0.8h-4.0zM82.8 368.60h3.9v0.8h-3.9zM87.9 368.60h5.3v0.8h-5.3zM94.3 368.60h4.7v0.8h-4.7zM99.9 368.60h2.2v0.8h-2.2zM103.0 368.60h5.2v0.8h-5.2zM109.2 368.60h4.3v0.8h-4.3zM114.4 368.60h1.4v0.8h-1.4zM50.8 370.40h4.9v0.8h-4.9zM56.8 370.40h4.9v0.8h-4.9zM62.6 370.40h4.1v0.8h-4.1zM67.7 370.40h3.8v0.8h-3.8zM72.4 370.40h6.0v0.8h-6.0zM79.3 370.40h6.4v0.8h-6.4zM87.0 370.40h1.6v0.8h-1.6zM89.6 370.40h5.6v0.8h-5.6zM96.5 370.40h3.7v0.8h-3.7zM101.1 370.40h2.5v0.8h-2.5zM105.0 370.40h2.6v0.8h-2.6zM108.6 370.40h2.2v0.8h-2.2zM111.9 370.40h3.9v0.8h-3.9zM50.8 372.20h5.6v0.8h-5.6zM57.5 372.20h5.9v0.8h-5.9zM64.5 372.20h2.7v0.8h-2.7zM68.4 372.20h3.9v0.8h-3.9zM73.2 372.20h1.5v0.8h-1.5zM75.8 372.20h3.8v0.8h-3.8zM80.5 372.20h2.2v0.8h-2.2zM83.6 372.20h3.1v0.8h-3.1zM87.9 372.20h1.5v0.8h-1.5zM90.6 372.20h5.7v0.8h-5.7zM97.2 372.20h6.1v0.8h-6.1zM104.5 372.20h6.0v0.8h-6.0zM111.4 372.20h3.4v0.8h-3.4zM50.8 374.00h6.5v0.8h-6.5zM58.4 374.00h3.3v0.8h-3.3zM62.7 374.00h2.9v0.8h-2.9zM66.4 374.00h2.0v0.8h-2.0zM69.6 374.00h2.9v0.8h-2.9zM73.8 374.00h2.7v0.8h-2.7zM77.5 374.00h4.1v0.8h-4.1zM82.5 374.00h3.4v0.8h-3.4zM87.1 374.00h2.7v0.8h-2.7zM50.8 377.60h4.7v0.8h-4.7zM56.7 377.60h6.2v0.8h-6.2zM64.0 377.60h5.1v0.8h-5.1zM69.9 377.60h5.2v0.8h-5.2zM76.1 377.60h5.3v0.8h-5.3zM82.5 377.60h2.9v0.8h-2.9zM86.2 377.60h6.1v0.8h-6.1zM93.2 377.60h3.9v0.8h-3.9zM98.1 377.60h3.0v0.8h-3.0zM102.2 377.60h6.4v0.8h-6.4zM109.5 377.60h4.8v0.8h-4.8zM50.8 379.40h4.3v0.8h-4.3zM56.1 379.40h2.3v0.8h-2.3zM59.3 379.40h2.5v0.8h-2.5zM63.1 379.40h4.0v0.8h-4.0zM68.0 379.40h6.0v0.8h-6.0zM75.3 379.40h3.7v0.8h-3.7zM79.9 379.40h2.5v0.8h-2.5zM83.2 379.40h3.2v0.8h-3.2zM87.3 379.40h2.7v0.8h-2.7zM90.9 379.40h4.3v0.8h-4.3zM96.5 379.40h5.2v0.8h-5.2zM102.8 379.40h3.6v0.8h-3.6zM107.4 379.40h3.4v0.8h-3.4zM111.8 379.40h1.8v0.8h-1.8zM50.8 381.20h6.3v0.8h-6.3zM58.0 381.20h4.0v0.8h-4.0zM63.1 381.20h5.8v0.8h-5.8zM69.9 381.20h2.9v0.8h-2.9zM73.6 381.20h3.5v0.8h-3.5zM78.2 381.20h6.3v0.8h-6.3zM85.7 381.20h5.9v0.8h-5.9zM92.3 381.20h1.7v0.8h-1.7zM95.1 381.20h6.0v0.8h-6.0zM102.2 381.20h4.4v0.8h-4.4zM107.4 381.20h3.5v0.8h-3.5zM112.1 381.20h2.7v0.8h-2.7zM50.8 383.00h6.4v0.8h-6.4zM58.1 383.00h2.0v0.8h-2.0zM61.0 383.00h4.1v0.8h-4.1zM66.3 383.00h6.2v0.8h-6.2zM73.6 383.00h4.7v0.8h-4.7zM79.5 383.00h3.8v0.8h-3.8zM84.4 383.00h1.7v0.8h-1.7zM87.3 383.00h1.9v0.8h-1.9z" fill="rgba(40,40,40,0.55)"/></svg>
<div class="r" style="left:45.7px;top:491.6px;width:28px;height:1.8px;background:rgba(30,30,30,0.8)"></div>
<div class="r" style="left:119.5px;top:586.5px;width:1px;height:1.2px;background:rgba(60,60,60,0.6)"></div>
<svg style="left:0;top:0" width="1248" height="800"><path d="M51.6 480.80h4.7v0.8h-4.7zM57.3 480.80h2.1v0.8h-2.1zM60.3 480.80h4.7v0.8h-4.7zM66.2 480.80h2.1v0.8h-2.1zM69.1 480.80h4.1v0.8h-4.1zM74.3 480.80h3.4v0.8h-3.4zM78.6 480.80h4.5v0.8h-4.5zM83.9 480.80h3.0v0.8h-3.0zM88.0 480.80h6.3v0.8h-6.3zM95.4 480.80h5.9v0.8h-5.9zM102.4 480.80h2.7v0.8h-2.7zM106.0 480.80h6.3v0.8h-6.3zM113.4 480.80h3.0v0.8h-3.0zM51.6 483.40h4.0v0.8h-4.0zM56.7 483.40h3.6v0.8h-3.6zM61.3 483.40h3.3v0.8h-3.3zM45.7 496.60h2.6v0.8h-2.6zM49.2 496.60h3.2v0.8h-3.2zM53.4 496.60h4.9v0.8h-4.9zM59.2 496.60h5.5v0.8h-5.5zM65.8 496.60h4.0v0.8h-4.0zM70.7 496.60h6.3v0.8h-6.3zM78.1 496.60h5.6v0.8h-5.6zM45.7 501.00h2.6v0.8h-2.6zM49.5 501.00h3.0v0.8h-3.0zM53.7 501.00h4.0v0.8h-4.0zM58.6 501.00h2.6v0.8h-2.6zM62.2 501.00h4.8v0.8h-4.8zM51.6 503.40h2.2v0.8h-2.2zM54.8 503.40h2.6v0.8h-2.6zM58.7 503.40h2.2v0.8h-2.2zM61.7 503.40h1.8v0.8h-1.8zM64.5 503.40h6.0v0.8h-6.0zM71.7 503.40h5.2v0.8h-5.2zM78.2 503.40h6.2v0.8h-6.2zM85.3 503.40h2.4v0.8h-2.4zM89.0 503.40h5.2v0.8h-5.2zM95.1 503.40h4.8v0.8h-4.8zM100.9 503.40h3.4v0.8h-3.4zM105.2 503.40h2.3v0.8h-2.3zM108.4 503.40h2.9v0.8h-2.9zM112.2 503.40h5.4v0.8h-5.4zM51.6 505.70h6.3v0.8h-6.3zM58.8 505.70h3.3v0.8h-3.3zM63.3 505.70h5.6v0.8h-5.6zM69.9 505.70h1.7v0.8h-1.7zM72.7 505.70h3.4v0.8h-3.4zM77.4 505.70h2.5v0.8h-2.5zM80.8 505.70h6.0v0.8h-6.0zM87.6 505.70h3.6v0.8h-3.6zM92.4 505.70h5.3v0.8h-5.3zM98.5 505.70h1.7v0.8h-1.7zM101.0 505.70h6.1v0.8h-6.1zM108.0 505.70h5.2v0.8h-5.2zM114.5 505.70h3.1v0.8h-3.1zM51.6 508.00h6.3v0.8h-6.3zM59.0 508.00h2.8v0.8h-2.8zM63.0 508.00h3.1v0.8h-3.1zM67.0 508.00h1.5v0.8h-1.5zM69.7 508.00h6.1v0.8h-6.1zM76.9 508.00h6.2v0.8h-6.2zM83.9 508.00h2.7v0.8h-2.7zM87.6 508.00h6.3v0.8h-6.3zM95.2 508.00h3.4v0.8h-3.4zM99.5 508.00h3.6v0.8h-3.6zM104.2 508.00h6.1v0.8h-6.1zM111.3 508.00h5.5v0.8h-5.5zM51.6 510.30h5.6v0.8h-5.6zM58.4 510.30h4.5v0.8h-4.5zM63.9 510.30h3.1v0.8h-3.1zM68.0 510.30h5.4v0.8h-5.4zM74.2 510.30h2.5v0.8h-2.5zM77.9 510.30h2.7v0.8h-2.7zM81.5 510.30h1.7v0.8h-1.7zM84.2 510.30h3.1v0.8h-3.1zM88.6 510.30h5.9v0.8h-5.9zM95.8 510.30h2.8v0.8h-2.8zM99.5 510.30h2.0v0.8h-2.0zM102.5 510.30h5.0v0.8h-5.0zM108.6 510.30h2.7v0.8h-2.7zM112.3 510.30h4.6v0.8h-4.6zM51.6 512.60h5.2v0.8h-5.2zM58.1 512.60h4.8v0.8h-4.8zM63.7 512.60h5.7v0.8h-5.7zM70.4 512.60h4.3v0.8h-4.3zM75.7 512.60h5.2v0.8h-5.2zM81.8 512.60h2.7v0.8h-2.7zM85.5 512.60h2.3v0.8h-2.3zM89.0 512.60h4.4v0.8h-4.4zM94.3 512.60h3.5v0.8h-3.5zM99.1 512.60h4.0v0.8h-4.0zM104.1 512.60h5.5v0.8h-5.5zM110.7 512.60h6.5v0.8h-6.5zM51.6 514.90h3.9v0.8h-3.9zM56.7 514.90h5.7v0.8h-5.7zM63.6 514.90h1.7v0.8h-1.7zM66.3 514.90h2.1v0.8h-2.1zM69.3 514.90h6.4v0.8h-6.4zM76.7 514.90h6.2v0.8h-6.2zM83.9 514.90h5.8v0.8h-5.8zM90.7 514.90h2.8v0.8h-2.8zM94.7 514.90h6.2v0.8h-6.2zM101.8 514.90h4.5v0.8h-4.5zM107.4 514.90h2.6v0.8h-2.6zM111.0 514.90h2.2v0.8h-2.2zM114.1 514.90h2.8v0.8h-2.8zM51.6 517.20h4.8v0.8h-4.8zM57.3 517.20h1.6v0.8h-1.6zM59.8 517.20h4.9v0.8h-4.9zM65.6 517.20h3.1v0.8h-3.1zM69.5 517.20h5.5v0.8h-5.5zM76.1 517.20h1.8v0.8h-1.8zM78.7 517.20h3.5v0.8h-3.5zM83.3 517.20h4.7v0.8h-4.7zM88.8 517.20h2.3v0.8h-2.3zM92.3 517.20h3.5v0.8h-3.5zM96.8 517.20h3.0v0.8h-3.0zM101.1 517.20h3.1v0.8h-3.1zM105.3 517.20h3.3v0.8h-3.3zM109.5 517.20h5.8v0.8h-5.8zM51.6 519.50h3.3v0.8h-3.3zM55.8 519.50h5.1v0.8h-5.1zM61.9 519.50h1.5v0.8h-1.5zM64.6 519.50h3.6v0.8h-3.6zM69.5 519.50h3.5v0.8h-3.5zM74.2 519.50h3.8v0.8h-3.8zM78.9 519.50h1.6v0.8h-1.6zM81.6 519.50h4.7v0.8h-4.7zM87.5 519.50h1.9v0.8h-1.9zM90.6 519.50h3.4v0.8h-3.4zM95.0 519.50h2.2v0.8h-2.2zM98.2 519.50h4.1v0.8h-4.1zM103.5 519.50h2.0v0.8h-2.0zM106.6 519.50h5.5v0.8h-5.5zM113.4 519.50h2.5v0.8h-2.5zM51.6 521.80h6.2v0.8h-6.2zM59.1 521.80h3.9v0.8h-3.9zM63.8 521.80h6.1v0.8h-6.1zM71.0 521.80h6.0v0.8h-6.0zM78.1 521.80h5.6v0.8h-5.6zM84.6 521.80h5.4v0.8h-5.4zM90.9 521.80h3.5v0.8h-3.5zM95.7 521.80h5.6v0.8h-5.6zM102.2 521.80h2.6v0.8h-2.6zM105.8 521.80h4.1v0.8h-4.1zM110.9 521.80h2.1v0.8h-2.1zM113.9 521.80h3.7v0.8h-3.7zM51.6 524.10h1.7v0.8h-1.7zM54.4 524.10h5.3v0.8h-5.3zM60.5 524.10h5.7v0.8h-5.7zM67.0 524.10h4.5v0.8h-4.5zM72.6 524.10h4.6v0.8h-4.6zM78.2 524.10h3.6v0.8h-3.6zM82.9 524.10h3.6v0.8h-3.6zM87.7 524.10h3.7v0.8h-3.7zM92.4 524.10h1.6v0.8h-1.6zM95.1 524.10h3.9v0.8h-3.9zM100.0 524.10h5.3v0.8h-5.3zM106.5 524.10h3.8v0.8h-3.8zM111.2 524.10h3.9v0.8h-3.9zM115.9 524.10h1.7v0.8h-1.7zM51.6 526.40h2.0v0.8h-2.0zM54.6 526.40h4.1v0.8h-4.1zM59.5 526.40h4.7v0.8h-4.7zM65.0 526.40h5.2v0.8h-5.2zM71.3 526.40h4.1v0.8h-4.1zM76.2 526.40h4.0v0.8h-4.0zM81.2 526.40h6.3v0.8h-6.3zM88.3 526.40h5.8v0.8h-5.8zM95.4 526.40h5.2v0.8h-5.2zM101.8 526.40h2.5v0.8h-2.5zM105.6 526.40h4.0v0.8h-4.0zM110.8 526.40h6.1v0.8h-6.1zM51.6 528.70h5.4v0.8h-5.4zM58.3 528.70h1.8v0.8h-1.8zM61.1 528.70h5.3v0.8h-5.3zM67.3 528.70h6.0v0.8h-6.0zM74.2 528.70h5.6v0.8h-5.6zM80.6 528.70h4.0v0.8h-4.0zM85.9 528.70h2.5v0.8h-2.5zM89.4 528.70h4.0v0.8h-4.0zM94.4 528.70h1.7v0.8h-1.7zM45.7 534.30h2.3v0.8h-2.3zM49.3 534.30h4.9v0.8h-4.9zM55.4 534.30h2.3v0.8h-2.3zM59.0 534.30h2.1v0.8h-2.1zM51.6 536.80h4.7v0.8h-4.7zM57.3 536.80h5.9v0.8h-5.9zM64.2 536.80h4.4v0.8h-4.4zM69.8 536.80h2.0v0.8h-2.0zM73.2 536.80h4.6v0.8h-4.6zM78.8 536.80h5.5v0.8h-5.5zM85.2 536.80h6.5v0.8h-6.5zM92.8 536.80h3.3v0.8h-3.3zM97.3 536.80h3.7v0.8h-3.7zM101.9 536.80h5.2v0.8h-5.2zM107.9 536.80h5.6v0.8h-5.6zM114.4 536.80h3.2v0.8h-3.2zM51.6 539.15h4.4v0.8h-4.4zM57.2 539.15h3.1v0.8h-3.1zM61.0 539.15h1.7v0.8h-1.7zM63.6 539.15h4.6v0.8h-4.6zM69.2 539.15h4.1v0.8h-4.1zM74.5 539.15h2.2v0.8h-2.2zM77.6 539.15h4.8v0.8h-4.8zM83.1 539.15h1.5v0.8h-1.5zM85.6 539.15h2.0v0.8h-2.0zM88.6 539.15h2.6v0.8h-2.6zM92.3 539.15h4.4v0.8h-4.4zM97.7 539.15h4.6v0.8h-4.6zM103.3 539.15h2.2v0.8h-2.2zM106.8 539.15h2.7v0.8h-2.7zM110.4 539.15h2.0v0.8h-2.0zM113.5 539.15h4.1v0.8h-4.1zM51.6 541.50h3.5v0.8h-3.5zM56.0 541.50h1.6v0.8h-1.6zM58.7 541.50h4.3v0.8h-4.3zM64.0 541.50h4.7v0.8h-4.7zM69.8 541.50h6.2v0.8h-6.2zM77.1 541.50h2.7v0.8h-2.7zM81.1 541.50h1.7v0.8h-1.7zM83.9 541.50h3.5v0.8h-3.5zM88.3 541.50h1.8v0.8h-1.8zM91.3 541.50h1.6v0.8h-1.6zM94.0 541.50h6.2v0.8h-6.2zM101.0 541.50h2.5v0.8h-2.5zM104.6 541.50h4.0v0.8h-4.0zM109.8 541.50h5.6v0.8h-5.6zM116.2 541.50h1.4v0.8h-1.4zM51.6 543.85h1.7v0.8h-1.7zM54.6 543.85h5.4v0.8h-5.4zM61.2 543.85h1.5v0.8h-1.5zM63.9 543.85h5.2v0.8h-5.2zM70.2 543.85h5.2v0.8h-5.2zM76.4 543.85h2.6v0.8h-2.6zM79.9 543.85h2.7v0.8h-2.7zM83.4 543.85h3.2v0.8h-3.2zM87.7 543.85h5.0v0.8h-5.0zM93.9 543.85h5.1v0.8h-5.1zM99.9 543.85h4.3v0.8h-4.3zM105.2 543.85h5.4v0.8h-5.4zM111.7 543.85h2.8v0.8h-2.8zM115.7 543.85h1.9v0.8h-1.9zM51.6 546.20h5.9v0.8h-5.9zM58.3 546.20h2.8v0.8h-2.8zM62.0 546.20h5.2v0.8h-5.2zM68.5 546.20h5.2v0.8h-5.2zM74.7 546.20h5.9v0.8h-5.9zM81.6 546.20h2.7v0.8h-2.7zM85.5 546.20h4.7v0.8h-4.7zM91.3 546.20h4.8v0.8h-4.8zM97.4 546.20h3.8v0.8h-3.8zM102.5 546.20h5.0v0.8h-5.0zM108.7 546.20h3.7v0.8h-3.7zM113.6 546.20h4.0v0.8h-4.0zM51.6 548.55h2.6v0.8h-2.6zM55.3 548.55h1.9v0.8h-1.9zM58.4 548.55h2.2v0.8h-2.2zM61.5 548.55h2.0v0.8h-2.0zM64.7 548.55h3.2v0.8h-3.2zM68.8 548.55h1.6v0.8h-1.6zM71.3 548.55h5.0v0.8h-5.0zM77.4 548.55h5.0v0.8h-5.0zM83.5 548.55h1.8v0.8h-1.8zM86.5 548.55h3.3v0.8h-3.3zM91.0 548.55h5.6v0.8h-5.6zM97.8 548.55h1.8v0.8h-1.8zM100.9 548.55h6.1v0.8h-6.1zM108.2 548.55h2.0v0.8h-2.0zM111.2 548.55h2.1v0.8h-2.1zM114.1 548.55h3.5v0.8h-3.5zM51.6 550.90h4.7v0.8h-4.7zM57.5 550.90h4.7v0.8h-4.7zM63.1 550.90h2.0v0.8h-2.0zM65.9 550.90h5.3v0.8h-5.3zM72.1 550.90h3.1v0.8h-3.1zM76.2 550.90h1.6v0.8h-1.6zM78.8 550.90h2.9v0.8h-2.9zM82.8 550.90h3.3v0.8h-3.3zM87.1 550.90h6.3v0.8h-6.3zM94.5 550.90h5.8v0.8h-5.8zM101.4 550.90h1.7v0.8h-1.7zM104.0 550.90h3.7v0.8h-3.7zM108.9 550.90h3.2v0.8h-3.2zM113.3 550.90h4.2v0.8h-4.2zM51.6 553.25h5.8v0.8h-5.8zM58.3 553.25h5.6v0.8h-5.6zM64.7 553.25h1.5v0.8h-1.5zM67.1 553.25h5.3v0.8h-5.3zM73.7 553.25h1.5v0.8h-1.5zM76.3 553.25h4.0v0.8h-4.0zM81.5 553.25h2.4v0.8h-2.4zM84.9 553.25h3.2v0.8h-3.2zM89.4 553.25h2.8v0.8h-2.8zM93.5 553.25h2.9v0.8h-2.9zM97.3 553.25h5.0v0.8h-5.0zM103.3 553.25h2.0v0.8h-2.0zM106.5 553.25h1.9v0.8h-1.9zM109.6 553.25h5.0v0.8h-5.0zM115.8 553.25h1.8v0.8h-1.8zM51.6 555.60h3.5v0.8h-3.5zM56.1 555.60h6.0v0.8h-6.0zM62.9 555.60h5.9v0.8h-5.9zM69.7 555.60h2.5v0.8h-2.5zM73.1 555.60h6.0v0.8h-6.0zM80.2 555.60h3.4v0.8h-3.4zM84.8 555.60h2.7v0.8h-2.7zM88.5 555.60h4.2v0.8h-4.2zM93.8 555.60h5.3v0.8h-5.3zM100.2 555.60h3.2v0.8h-3.2zM104.4 555.60h2.3v0.8h-2.3zM107.9 555.60h4.8v0.8h-4.8zM113.9 555.60h2.3v0.8h-2.3zM51.6 557.95h5.4v0.8h-5.4zM58.1 557.95h2.1v0.8h-2.1zM61.2 557.95h5.9v0.8h-5.9zM68.1 557.95h2.5v0.8h-2.5zM71.5 557.95h5.0v0.8h-5.0zM77.7 557.95h2.3v0.8h-2.3zM80.9 557.95h2.7v0.8h-2.7zM48.0 562.80h4.1v0.8h-4.1zM53.0 562.80h3.1v0.8h-3.1zM57.0 562.80h6.4v0.8h-6.4zM64.6 562.80h2.0v0.8h-2.0zM67.9 562.80h2.0v0.8h-2.0zM70.9 562.80h6.4v0.8h-6.4zM78.5 562.80h5.2v0.8h-5.2zM84.7 562.80h2.5v0.8h-2.5zM45.7 567.20h2.0v0.8h-2.0zM48.6 567.20h3.4v0.8h-3.4zM52.9 567.20h3.5v0.8h-3.5zM57.6 567.20h5.0v0.8h-5.0zM63.6 567.20h4.7v0.8h-4.7zM69.3 567.20h2.2v0.8h-2.2zM72.6 567.20h3.5v0.8h-3.5zM77.3 567.20h1.4v0.8h-1.4zM51.6 569.60h4.4v0.8h-4.4zM57.1 569.60h3.6v0.8h-3.6zM61.7 569.60h5.1v0.8h-5.1zM68.0 569.60h5.4v0.8h-5.4zM74.5 569.60h5.8v0.8h-5.8zM81.4 569.60h4.7v0.8h-4.7zM87.2 569.60h3.1v0.8h-3.1zM91.4 569.60h2.0v0.8h-2.0zM94.4 569.60h5.4v0.8h-5.4zM100.9 569.60h4.6v0.8h-4.6zM106.5 569.60h3.6v0.8h-3.6zM111.1 569.60h4.6v0.8h-4.6zM51.6 571.80h4.9v0.8h-4.9zM57.7 571.80h2.4v0.8h-2.4zM61.3 571.80h5.4v0.8h-5.4zM67.7 571.80h3.9v0.8h-3.9zM72.9 571.80h1.7v0.8h-1.7zM75.7 571.80h2.3v0.8h-2.3zM79.2 571.80h6.2v0.8h-6.2zM86.4 571.80h2.0v0.8h-2.0zM89.5 571.80h4.2v0.8h-4.2zM94.9 571.80h4.1v0.8h-4.1zM100.1 571.80h5.6v0.8h-5.6zM106.8 571.80h3.6v0.8h-3.6zM111.6 571.80h2.6v0.8h-2.6zM115.3 571.80h2.3v0.8h-2.3zM51.6 574.00h2.1v0.8h-2.1zM55.0 574.00h3.3v0.8h-3.3zM59.1 574.00h2.9v0.8h-2.9zM63.0 574.00h1.6v0.8h-1.6zM65.6 574.00h3.6v0.8h-3.6zM70.3 574.00h3.3v0.8h-3.3zM74.5 574.00h2.6v0.8h-2.6zM78.3 574.00h6.2v0.8h-6.2zM85.6 574.00h2.6v0.8h-2.6zM89.4 574.00h3.5v0.8h-3.5zM93.7 574.00h2.1v0.8h-2.1zM97.1 574.00h5.5v0.8h-5.5zM103.7 574.00h3.8v0.8h-3.8zM108.6 574.00h2.6v0.8h-2.6zM112.6 574.00h3.3v0.8h-3.3zM51.6 576.20h5.6v0.8h-5.6zM58.4 576.20h3.8v0.8h-3.8zM63.2 576.20h4.2v0.8h-4.2zM68.3 576.20h5.7v0.8h-5.7zM74.9 576.20h5.8v0.8h-5.8zM81.6 576.20h3.4v0.8h-3.4zM85.9 576.20h3.6v0.8h-3.6zM90.5 576.20h1.5v0.8h-1.5zM93.1 576.20h2.9v0.8h-2.9zM97.0 576.20h3.0v0.8h-3.0zM101.0 576.20h3.6v0.8h-3.6zM105.8 576.20h4.8v0.8h-4.8zM111.5 576.20h6.1v0.8h-6.1zM51.6 578.40h1.8v0.8h-1.8zM54.6 578.40h6.0v0.8h-6.0zM61.8 578.40h2.2v0.8h-2.2zM65.2 578.40h4.7v0.8h-4.7zM70.7 578.40h1.6v0.8h-1.6zM73.5 578.40h4.8v0.8h-4.8zM79.2 578.40h2.0v0.8h-2.0zM82.1 578.40h2.7v0.8h-2.7zM86.0 578.40h3.2v0.8h-3.2zM90.1 578.40h1.1v0.8h-1.1z" fill="rgba(40,40,40,0.55)"/></svg>
<svg style="left:0;top:0" width="1248" height="800"><path d="M35.6 643.60h2.3v0.8h-2.3zM39.2 643.60h4.5v0.8h-4.5zM44.9 643.60h4.8v0.8h-4.8zM51.0 643.60h5.4v0.8h-5.4zM57.7 643.60h2.5v0.8h-2.5zM61.3 643.60h4.2v0.8h-4.2zM66.6 643.60h2.0v0.8h-2.0zM35.6 645.90h4.3v0.8h-4.3zM40.8 645.90h2.7v0.8h-2.7zM44.3 645.90h4.0v0.8h-4.0zM49.1 645.90h3.8v0.8h-3.8zM53.9 645.90h4.0v0.8h-4.0zM58.9 645.90h4.2v0.8h-4.2zM64.3 645.90h1.5v0.8h-1.5zM67.0 645.90h1.6v0.8h-1.6zM35.6 648.20h4.8v0.8h-4.8zM41.6 648.20h3.4v0.8h-3.4zM46.0 648.20h6.3v0.8h-6.3zM53.2 648.20h4.7v0.8h-4.7zM59.0 648.20h1.6v0.8h-1.6zM61.7 648.20h4.9v0.8h-4.9zM35.6 650.50h3.2v0.8h-3.2zM40.0 650.50h4.1v0.8h-4.1zM45.1 650.50h6.0v0.8h-6.0zM51.9 650.50h5.1v0.8h-5.1zM104.7 656.00h3.2v0.8h-3.2zM109.1 656.00h3.3v0.8h-3.3zM113.5 656.00h4.1v0.8h-4.1zM118.8 656.00h1.9v0.8h-1.9zM35.6 661.40h3.6v0.8h-3.6zM40.3 661.40h5.6v0.8h-5.6zM46.9 661.40h5.6v0.8h-5.6zM53.5 661.40h4.0v0.8h-4.0zM58.5 661.40h4.0v0.8h-4.0zM63.8 661.40h4.8v0.8h-4.8zM69.8 661.40h3.2v0.8h-3.2zM73.9 661.40h3.0v0.8h-3.0zM35.6 669.50h4.7v0.8h-4.7zM41.5 669.50h1.7v0.8h-1.7zM44.3 669.50h5.9v0.8h-5.9zM51.3 669.50h1.7v0.8h-1.7zM35.6 674.00h1.5v0.8h-1.5zM38.0 674.00h6.1v0.8h-6.1zM45.2 674.00h4.8v0.8h-4.8zM51.2 674.00h6.0v0.8h-6.0zM58.4 674.00h4.6v0.8h-4.6zM64.1 674.00h5.0v0.8h-5.0zM70.2 674.00h4.9v0.8h-4.9zM76.0 674.00h4.8v0.8h-4.8zM81.8 674.00h5.3v0.8h-5.3zM88.0 674.00h2.4v0.8h-2.4zM91.2 674.00h5.4v0.8h-5.4zM97.8 674.00h4.8v0.8h-4.8zM103.6 674.00h5.6v0.8h-5.6zM110.4 674.00h4.3v0.8h-4.3zM115.7 674.00h3.0v0.8h-3.0zM35.6 676.60h3.1v0.8h-3.1zM39.7 676.60h4.7v0.8h-4.7zM45.7 676.60h1.8v0.8h-1.8zM48.5 676.60h1.7v0.8h-1.7zM51.1 676.60h5.6v0.8h-5.6zM57.7 676.60h6.1v0.8h-6.1zM64.9 676.60h1.6v0.8h-1.6zM67.4 676.60h4.5v0.8h-4.5zM73.1 676.60h6.4v0.8h-6.4zM80.6 676.60h3.6v0.8h-3.6zM85.0 676.60h4.7v0.8h-4.7zM90.6 676.60h2.3v0.8h-2.3zM93.7 676.60h1.5v0.8h-1.5zM35.6 681.60h2.1v0.8h-2.1zM39.0 681.60h1.9v0.8h-1.9zM42.2 681.60h1.4v0.8h-1.4zM35.6 689.60h5.1v0.8h-5.1zM41.6 689.60h5.2v0.8h-5.2zM47.7 689.60h1.8v0.8h-1.8zM50.6 689.60h5.1v0.8h-5.1zM56.9 689.60h5.1v0.8h-5.1zM62.9 689.60h4.6v0.8h-4.6zM68.7 689.60h3.8v0.8h-3.8zM73.8 689.60h2.8v0.8h-2.8zM77.8 689.60h5.1v0.8h-5.1zM83.7 689.60h1.6v0.8h-1.6zM86.4 689.60h5.6v0.8h-5.6zM92.8 689.60h2.8v0.8h-2.8zM35.6 692.00h2.3v0.8h-2.3zM39.2 692.00h3.9v0.8h-3.9zM43.9 692.00h3.3v0.8h-3.3zM48.3 692.00h3.7v0.8h-3.7zM53.2 692.00h2.2v0.8h-2.2zM56.6 692.00h3.3v0.8h-3.3zM61.0 692.00h4.6v0.8h-4.6zM66.7 692.00h3.4v0.8h-3.4zM71.3 692.00h6.2v0.8h-6.2zM78.7 692.00h4.3v0.8h-4.3zM84.0 692.00h1.8v0.8h-1.8zM35.6 696.40h5.0v0.8h-5.0zM41.8 696.40h3.2v0.8h-3.2zM46.1 696.40h6.4v0.8h-6.4zM53.7 696.40h4.5v0.8h-4.5zM59.2 696.40h3.6v0.8h-3.6zM64.0 696.40h3.4v0.8h-3.4zM68.6 696.40h4.5v0.8h-4.5zM74.3 696.40h5.5v0.8h-5.5zM35.6 699.80h1.5v0.8h-1.5zM38.0 699.80h3.6v0.8h-3.6zM42.7 699.80h5.6v0.8h-5.6zM49.6 699.80h1.7v0.8h-1.7zM52.5 699.80h5.6v0.8h-5.6zM59.3 699.80h4.4v0.8h-4.4zM64.6 699.80h5.8v0.8h-5.8zM71.5 699.80h4.9v0.8h-4.9zM77.7 699.80h3.2v0.8h-3.2zM81.8 699.80h4.3v0.8h-4.3zM87.3 699.80h2.5v0.8h-2.5zM35.6 702.40h6.2v0.8h-6.2zM42.7 702.40h4.5v0.8h-4.5zM48.3 702.40h3.8v0.8h-3.8zM53.1 702.40h2.8v0.8h-2.8zM57.0 702.40h5.5v0.8h-5.5zM63.5 702.40h1.9v0.8h-1.9zM66.7 702.40h5.4v0.8h-5.4zM72.9 702.40h1.2v0.8h-1.2z" fill="rgba(40,40,40,0.42)"/></svg>
<svg style="left:0;top:0" width="1248" height="800"><g fill="none" stroke="rgba(70,120,200,0.55)" stroke-width="0.6">
<path d="M50 696 q3 -5 5 2 q2 4 4 -3 q2 -4 3 2 q3 3 6 0 M53 704 q1 -6 2 -10 M62 710 q0 -8 1 -18"/>
<path d="M90 697 q5 -1 10 0 q5 -2 8 -1 q3 -3 5 1"/>
</g>
<path d="M80 698 H110" stroke="rgba(120,120,120,0.5)" stroke-width="0.5"/>
</svg>
<div class="r" style="left:890px;top:112px;width:1px;height:688px;background:#c3c8cc"></div>
<div class="r" style="left:891px;top:159px;width:357px;height:1px;background:#c8cad4"></div>
<div class="t" style="left:908.5px;top:128.40px;font-size:16px;color:#1f2328;font-weight:normal;letter-spacing:-0.06px;font-family:'Liberation Sans', sans-serif;-webkit-text-stroke:0.8px #1f2328">Document fields</div>
<div class="t" style="left:908px;top:185.10px;font-size:16px;color:#1f2328;font-weight:normal;letter-spacing:-0.15px;font-family:'Liberation Sans', sans-serif;-webkit-text-stroke:0.3px #1f2328">General fields</div>
<svg style="left:0;top:0" width="1248" height="800"><g fill="none" stroke="#2b3238" stroke-width="1.1">
<path d="M1210 195.3 L1216.3 188.8 L1222.6 195.3"/>
<path d="M1210 688.8 L1216.3 682.3 L1222.6 688.8"/>
</g></svg>
<div class="t" style="left:924.8px;top:231.90px;font-size:16px;color:#2f8a2f;font-weight:normal;letter-spacing:-0.28px;font-family:'Liberation Sans', sans-serif;">All (5)</div>
<div class="r" style="left:908px;top:257px;width:324px;height:1px;background:#c9ced2"></div>
<div class="r" style="left:908px;top:255px;width:74px;height:3px;background:#2f8a2f"></div>
<svg style="left:0;top:0" width="1248" height="800"><g fill="none" stroke="#1f2328" stroke-width="1.2">
<circle cx="1005.4" cy="239" r="6.8"/></g>
<path d="M1005.4 234.8 V240" stroke="#1f2328" stroke-width="1.3"/><circle cx="1005.4" cy="242.6" r="0.8" fill="#1f2328"/>
<polygon points="1170.5,236 1181,236 1175.75,242" fill="#1f2328"/>
</svg>
<div class="t" style="left:1016.5px;top:231.90px;font-size:16px;color:#1f2328;font-weight:normal;letter-spacing:-0.43px;font-family:'Liberation Sans', sans-serif;">Warning (1)</div>
<div class="t" style="left:1128.6px;top:231.90px;font-size:16px;color:#1f2328;font-weight:normal;letter-spacing:0.1px;font-family:'Liberation Sans', sans-serif;">More</div>
<div class="r" style="left:908px;top:273px;width:324px;height:75px;border:1px solid #a7aeb3;border-radius:4px;background:#fff"></div>
<svg style="left:0;top:0" width="1248" height="800"><circle cx="927.2" cy="290.3" r="7.4" fill="none" stroke="#2b3238" stroke-width="1.2" stroke-dasharray="1.6 2.27"/></svg>
<div class="t" style="left:948.4px;top:285.10px;font-size:12px;color:#2b3238;font-weight:normal;letter-spacing:-0.22px;font-family:'Liberation Sans', sans-serif;">Provider address</div>
<div class="t" style="left:948.4px;top:305.04px;font-size:16px;color:#2a3035;font-weight:normal;letter-spacing:-0.03px;font-family:'Liberation Mono', monospace;">57 Prospect St Nantucket MA</div>
<div class="t" style="left:948.4px;top:326.24px;font-size:16px;color:#2a3035;font-weight:normal;letter-spacing:-0.03px;font-family:'Liberation Mono', monospace;">02554</div>
<div class="r" style="left:908px;top:365px;width:324px;height:56px;border:1px solid #a7aeb3;border-radius:4px;background:#fff"></div>
<svg style="left:0;top:0" width="1248" height="800"><circle cx="927.2" cy="380.1" r="7.4" fill="none" stroke="#2b3238" stroke-width="1.2" stroke-dasharray="1.6 2.27"/></svg>
<div class="t" style="left:948.4px;top:374.90px;font-size:12px;color:#2b3238;font-weight:normal;letter-spacing:0px;font-family:'Liberation Sans', sans-serif;">Country</div>
<div class="t" style="left:948.4px;top:394.74px;font-size:16px;color:#2a3035;font-weight:normal;letter-spacing:-0.03px;font-family:'Liberation Mono', monospace;">United States</div>
<div class="r" style="left:908px;top:437px;width:324px;height:56px;border:1px solid #a7aeb3;border-radius:4px;background:#fff"></div>
<svg style="left:0;top:0" width="1248" height="800"><circle cx="927.2" cy="452.1" r="7.3" fill="none" stroke="#d9283a" stroke-width="1.25"/><path d="M927.2 448.1 V453.3" stroke="#d9283a" stroke-width="1.4"/><circle cx="927.2" cy="455.6" r="0.85" fill="#d9283a"/></svg>
<div class="t" style="left:948.4px;top:446.90px;font-size:12px;color:#2b3238;font-weight:normal;letter-spacing:0px;font-family:'Liberation Sans', sans-serif;">Order number</div>
<svg style="left:0;top:0" width="1248" height="800"><g stroke="#2b3238" stroke-width="0.95"><path d="M1033 446.3 V455.3 M1029 448.6 L1037 453.0 M1029 453.0 L1037 448.6"/></g></svg>
<div class="t" style="left:948.4px;top:467.84px;font-size:16px;color:#2a3035;font-weight:normal;letter-spacing:-0.03px;font-family:'Liberation Mono', monospace;">-</div>
<div class="r" style="left:908px;top:509px;width:324px;height:56px;border:1px solid #a7aeb3;border-radius:4px;background:#fff"></div>
<svg style="left:0;top:0" width="1248" height="800"><circle cx="927.2" cy="524.2" r="7.4" fill="none" stroke="#2b3238" stroke-width="1.2" stroke-dasharray="1.6 2.27"/></svg>
<div class="t" style="left:948.4px;top:519.00px;font-size:12px;color:#2b3238;font-weight:normal;letter-spacing:0px;font-family:'Liberation Sans', sans-serif;">Order date (YYYY-MM-DD)</div>
<svg style="left:0;top:0" width="1248" height="800"><g stroke="#2b3238" stroke-width="0.95"><path d="M1103.5 518.4 V527.4 M1099.5 520.7 L1107.5 525.1 M1099.5 525.1 L1107.5 520.7"/></g></svg>
<svg style="left:0;top:0" width="1248" height="800"><g fill="none" stroke="#1f2328" stroke-width="1.3"><path d="M950 540.5 V548.0 H961 M957.5 544.5 L961 548.0 L957.5 551.5"/></g></svg>
<div class="t" style="left:968px;top:540.34px;font-size:16px;color:#2a3035;font-weight:normal;letter-spacing:-0.03px;font-family:'Liberation Mono', monospace;">2023-12-11</div>
<div class="r" style="left:908px;top:581px;width:324px;height:56px;border:1px solid #a7aeb3;border-radius:4px;background:#fff"></div>
<svg style="left:0;top:0" width="1248" height="800"><circle cx="927.2" cy="596.4" r="7.4" fill="none" stroke="#2b3238" stroke-width="1.2" stroke-dasharray="1.6 2.27"/></svg>
<div class="t" style="left:948.4px;top:591.20px;font-size:12px;color:#2b3238;font-weight:normal;letter-spacing:0px;font-family:'Liberation Sans', sans-serif;">Total amount</div>
<svg style="left:0;top:0" width="1248" height="800"><g stroke="#2b3238" stroke-width="0.95"><path d="M1026.5 590.6 V599.6 M1022.5 592.9 L1030.5 597.3 M1022.5 597.3 L1030.5 592.9"/></g></svg>
<svg style="left:0;top:0" width="1248" height="800"><g fill="none" stroke="#1f2328" stroke-width="1.3"><path d="M950 612.4 V619.9 H961 M957.5 616.4 L961 619.9 L957.5 623.4"/></g></svg>
<div class="t" style="left:968px;top:612.24px;font-size:16px;color:#2a3035;font-weight:normal;letter-spacing:-0.03px;font-family:'Liberation Mono', monospace;">1,168.90 CAD</div>
<div class="r" style="left:159px;top:450px;width:18px;height:18px;background:#fff;border:1px solid #c3c8cc;border-radius:3px"></div>
<div class="r" style="left:883px;top:450px;width:18px;height:18px;background:#fff;border:1px solid #c3c8cc;border-radius:3px"></div>
<svg style="left:0;top:0" width="1248" height="800"><g fill="none" stroke="#1f2328" stroke-width="1.3">
<path d="M170.2 455 L166.3 459 L170.2 463" stroke-width="1.15"/>
<path d="M889.8 455 L893.7 459 L889.8 463" stroke-width="1.15"/>
</g></svg>
<div class="r" style="left:891px;top:652px;width:357px;height:2px;background:#e3e6e8"></div>
<div class="t" style="left:908px;top:678.80px;font-size:16px;color:#1f2328;font-weight:normal;letter-spacing:-0.18px;font-family:'Liberation Sans', sans-serif;-webkit-text-stroke:0.3px #1f2328">Table fields</div>
<div class="t" style="left:924.2px;top:726.10px;font-size:16px;color:#1a6ad6;font-weight:normal;letter-spacing:-0.45px;font-family:'Liberation Sans', sans-serif;-webkit-text-stroke:0.25px #1a6ad6">Table 1</div>
<svg style="left:0;top:0" width="1248" height="800">
<circle cx="1095.3" cy="733.2" r="7" fill="none" stroke="#2b3238" stroke-width="1.2" stroke-dasharray="1.5 1.8"/>
<circle cx="1147.2" cy="733.2" r="7.3" fill="#2f8a1f"/>
<path d="M1143.8 733.5 L1146.3 736 L1150.8 731" fill="none" stroke="#fff" stroke-width="1.4"/>
<path d="M1194.8 740.5 V727.2" stroke="#1f2328" stroke-width="1.5"/>
<path d="M1195.5 727.5 H1205.3 L1203 731 L1205.3 734.5 H1195.5 Z" fill="#1f2328"/>
</svg>
<div class="t" style="left:1108.3px;top:726.52px;font-size:13.5px;color:#1f2328;font-weight:normal;letter-spacing:-0.3px;font-family:'Liberation Sans', sans-serif;-webkit-text-stroke:0.35px #1f2328">12</div>
<div class="t" style="left:1160.2px;top:726.52px;font-size:13.5px;color:#1f2328;font-weight:normal;letter-spacing:0px;font-family:'Liberation Sans', sans-serif;-webkit-text-stroke:0.35px #1f2328">0</div>
<div class="t" style="left:1211.8px;top:726.52px;font-size:13.5px;color:#1f2328;font-weight:normal;letter-spacing:0px;font-family:'Liberation Sans', sans-serif;-webkit-text-stroke:0.35px #1f2328">0</div>
<div class="r" style="left:908px;top:765px;width:324px;height:1px;background:#eceef0"></div>
</body></html>
